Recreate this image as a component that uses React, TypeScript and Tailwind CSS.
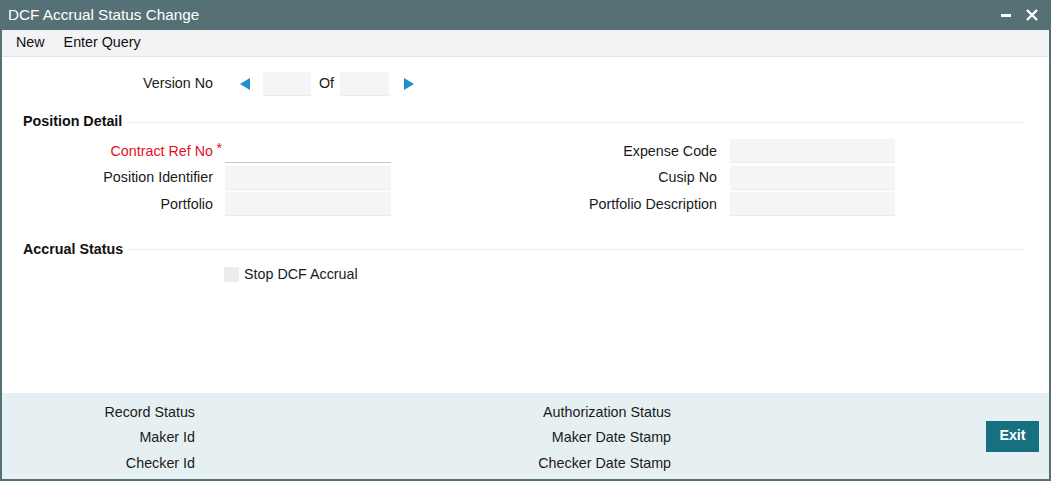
import React from 'react';

const font = { fontFamily: '"Liberation Sans", Arial, sans-serif' };

const Field: React.FC<{ underline?: boolean; className?: string }> = ({ underline, className = '' }) => (
  <div
    className={`h-[24px] ${underline ? 'bg-white border-b border-[#c8c8c8]' : 'bg-[#f5f5f5] border-b border-[#ebebeb]'} ${className}`}
  />
);

const Row: React.FC<{ label: string; required?: boolean; underline?: boolean; right: string }> = ({
  label,
  required,
  underline,
  right,
}) => (
  <div className="flex items-center h-[26.5px]">
    <div className={`relative w-[211px] text-right ${required ? 'text-[#e3101e]' : 'text-[#1a1a1a]'}`}>
      {label}
      {required && <span className="absolute -right-[9px] -top-[3px] text-[#e3101e]">*</span>}
    </div>
    <Field underline={underline} className="ml-[12px] w-[166px]" />
    <div className="w-[326px] text-right text-[#1a1a1a]">{right}</div>
    <Field className="ml-[13px] w-[165px]" />
  </div>
);

const SectionHeader: React.FC<{ title: string }> = ({ title }) => (
  <div className="flex items-center pl-[21px] pr-[26px] h-[20px]">
    <span className="font-bold text-[#111]">{title}</span>
    <div className="flex-1 h-px bg-[#ececec] ml-[5px]" />
  </div>
);

const App: React.FC = () => {
  return (
    <div
      className="w-[1051px] h-[481px] flex flex-col border-x-2 border-b-2 border-[#557175] text-[14.3px] bg-white"
      style={font}
    >
      {/* title bar */}
      <div className="h-[30px] -mx-[2px] bg-[#557175] flex items-center justify-between pl-[8px] pr-[12px]">
        <span className="text-white text-[15.3px]">DCF Accrual Status Change</span>
        <div className="flex items-center gap-[14px]">
          <svg width="10" height="14" viewBox="0 0 10 14">
            <rect x="0" y="6" width="10" height="3" fill="#fff" />
          </svg>
          <svg width="14" height="14" viewBox="0 0 14 14">
            <path d="M2 2 L12 12 M12 2 L2 12" stroke="#fff" strokeWidth="2.4" />
          </svg>
        </div>
      </div>

      {/* menu */}
      <div className="h-[27px] bg-[#f3f3f6] border-b border-[#e4e4e8] flex items-center gap-[19px] pl-[14px] text-[#111]">
        <span>New</span>
        <span>Enter Query</span>
      </div>

      {/* content */}
      <div className="flex-1 flex flex-col">
        <div className="flex items-center h-[24px] mt-[15px]">
          <div className="w-[211px] text-right text-[#1a1a1a]">Version No</div>
          <svg className="ml-[27px]" width="10" height="12" viewBox="0 0 10 12">
            <path d="M10 0 L0 6 L10 12 Z" fill="#1b8fd0" />
          </svg>
          <Field className="ml-[13px] w-[48px]" />
          <span className="ml-[8px] text-[#1a1a1a]">Of</span>
          <Field className="ml-[6px] w-[49px]" />
          <svg className="ml-[15px]" width="10" height="12" viewBox="0 0 10 12">
            <path d="M0 0 L10 6 L0 12 Z" fill="#1b8fd0" />
          </svg>
        </div>

        <div className="mt-[16px]">
          <SectionHeader title="Position Detail" />
        </div>
        <div className="flex flex-col mt-[6px]">
          <Row label="Contract Ref No" required underline right="Expense Code" />
          <Row label="Position Identifier" right="Cusip No" />
          <Row label="Portfolio" right="Portfolio Description" />
        </div>

        <div className="mt-[22px]">
          <SectionHeader title="Accrual Status" />
        </div>
        <div className="flex items-center h-[20px] mt-[5px] pl-[222px]">
          <div className="w-[15px] h-[15px] bg-[#ececec]" />
          <span className="ml-[5px] text-[#1a1a1a]">Stop DCF Accrual</span>
        </div>
      </div>

      {/* footer */}
      <div className="h-[86px] bg-[#e6f0f2] flex items-center pr-[10px] text-[#1a1a1a]">
        <div className="flex flex-col w-[193px] text-right gap-[9.5px] leading-[16px] mt-[2px]">
          <span>Record Status</span>
          <span>Maker Id</span>
          <span>Checker Id</span>
        </div>
        <div className="flex flex-col w-[476px] text-right gap-[9.5px] leading-[16px] mt-[2px]">
          <span>Authorization Status</span>
          <span>Maker Date Stamp</span>
          <span>Checker Date Stamp</span>
        </div>
        <div className="flex-1" />
        <button className="w-[53px] h-[31px] bg-[#17707f] text-white font-bold text-[14.3px]">Exit</button>
      </div>
    </div>
  );
};

export default App;
